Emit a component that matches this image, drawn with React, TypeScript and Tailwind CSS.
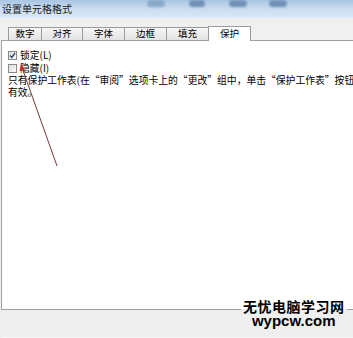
import React from "react";

const tabs = [
  { label: "数字", w: "w-[34px]" },
  { label: "对齐", w: "w-[42px]" },
  { label: "字体", w: "w-[43px]" },
  { label: "边框", w: "w-[43px]" },
  { label: "填充", w: "w-[43px]" },
];

function Box({ checked }: { checked?: boolean }) {
  return (
    <span className="w-[9px] h-[9px] border border-[#8a8a8a] bg-gradient-to-br from-[#dcdcdc] to-[#fafafa] flex items-center justify-center shrink-0">
      {checked && (
        <svg width="7" height="7" viewBox="0 0 7 7">
          <path d="M1 3.5 L2.8 5.5 L6 1" stroke="#2a3f6a" strokeWidth="1.3" fill="none" />
        </svg>
      )}
    </span>
  );
}

export default function App() {
  return (
    <div
      className="relative w-[353px] h-[338px] overflow-hidden bg-[#f0f0f0] text-black"
      style={{ fontFamily: '"Noto Sans CJK SC", "Liberation Sans", sans-serif' }}
    >
      {/* title bar */}
      <div className="relative h-[17px] bg-gradient-to-b from-[#a8c5e3] via-[#c8dcf0] to-[#d8e7f6] flex items-center pl-[2px] text-[10px] leading-none text-[#1a1a1a] overflow-hidden">
        设置单元格格式
        {/* blurred caption buttons */}
        <div className="absolute left-[147px] top-0 w-[18px] h-[7px] rounded-full bg-[#8aa8c8] blur-[1px]" />
        <div className="absolute left-[189px] top-0 w-[16px] h-[7px] rounded-full bg-[#7192b6] blur-[1px]" />
        <div className="absolute left-[229px] top-0 w-[18px] h-[7px] rounded-full bg-[#7192b6] blur-[1px]" />
        <div className="absolute left-[269px] top-0 w-[18px] h-[7px] rounded-full bg-[#7192b6] blur-[1px]" />
      </div>
      <div className="h-[2px] bg-[#e6eef7]" />

      <div className="flex h-[319px]">
        {/* window edge */}
        <div className="w-[5px] bg-gradient-to-r from-[#a9bacb] to-[#c9d6e3]" />

        <div className="flex-1 flex flex-col pl-[1px] bg-[#f0f0f0]">
          {/* tabs */}
          <div className="flex items-end h-[21px] pl-[7px]">
            {tabs.map((t) => (
              <div
                key={t.label}
                className={`${t.w} h-[13px] border border-b-0 border-[#9a9a9a] bg-gradient-to-b from-[#f6f6f6] to-[#e3e3e3] flex items-center justify-center text-[9.5px] leading-none -mr-px`}
              >
                {t.label}
              </div>
            ))}
            <div className="w-[43px] h-[15px] border border-b-0 border-[#9a9a9a] bg-white flex items-center justify-center text-[9.5px] leading-none -mb-px relative z-10">
              保护
            </div>
          </div>

          {/* panel */}
          <div className="h-[270px] bg-white border-l border-t border-b border-[#a0a0a0] pt-[8px] pl-[6px] text-[9.8px] leading-none">
            <div className="flex items-center gap-[3px] h-[13px]">
              <Box checked />
              <span>锁定(L)</span>
            </div>
            <div className="flex items-center gap-[3px] h-[13px]">
              <Box />
              <span>隐藏(I)</span>
            </div>
            <div className="h-[12px] flex items-center whitespace-nowrap">
              只有保护工作表(在“审阅”选项卡上的“更改”组中，单击“保护工作表”按钮)
            </div>
            <div className="h-[11px] flex items-center">有效。</div>
          </div>

          <div className="flex-1 bg-[#efefef] border-b border-[#f7f7f7]" />
        </div>
      </div>

      {/* red annotation arrow */}
      <svg className="absolute left-0 top-0 pointer-events-none" width="353" height="338">
        <line x1="57" y1="166" x2="22.5" y2="69" stroke="#6e3a3a" strokeWidth="1" />
        <polygon points="21,64 19.5,71 25,69.5" fill="#c82a2a" />
      </svg>

      {/* watermark */}
      <div className="absolute left-[241px] top-[298px] flex flex-col items-center">
        <span className="px-[2px] h-[15px] flex items-center leading-none bg-[linear-gradient(to_bottom,#ffffff_0,#ffffff_11px,#efefef_11px)] text-[14px] font-bold tracking-[0.5px]">
          无忧电脑学习网
        </span>
        <span
          className="h-[14px] flex items-center leading-none text-[15px] font-bold"
          style={{ fontFamily: '"Liberation Sans", Arial, sans-serif' }}
        >
          wypcw.com
        </span>
      </div>
    </div>
  );
}
